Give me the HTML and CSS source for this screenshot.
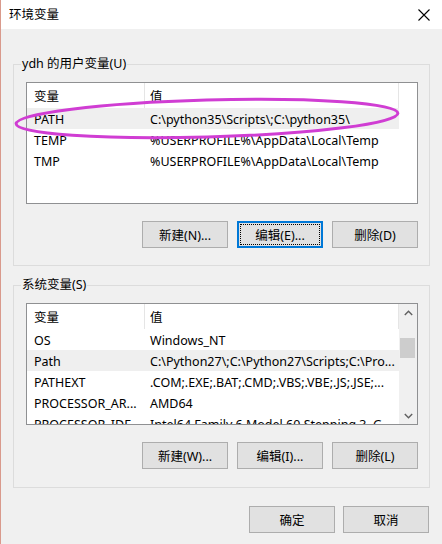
FILE: index.html
```html
<!DOCTYPE html>
<html lang="zh-CN">
<head>
<meta charset="utf-8">
<title>环境变量</title>
<link rel="stylesheet" href="styles.css">
</head>
<body>
<div class="window">
  <div class="titlebar">
    <span class="title">环境变量</span>
    <div class="close">
      <svg width="12" height="12" viewBox="0 0 12 12"><path d="M0.5 0.5 L11.5 11.5 M11.5 0.5 L0.5 11.5" stroke="#000" stroke-width="1.1" fill="none"/></svg>
    </div>
  </div>
  <div class="content">
    <fieldset class="group group-user">
      <legend>ydh 的用户变量(U)</legend>
      <div class="list">
        <div class="list-main">
          <div class="list-head"><div class="c1">变量</div><div class="c2">值</div></div>
          <div class="row sel"><div class="c1">PATH</div><div class="c2">C:\python35\Scripts\;C:\python35\</div></div>
          <div class="row"><div class="c1">TEMP</div><div class="c2">%USERPROFILE%\AppData\Local\Temp</div></div>
          <div class="row"><div class="c1">TMP</div><div class="c2">%USERPROFILE%\AppData\Local\Temp</div></div>
        </div>
      </div>
      <div class="btns">
        <div class="btn">新建(N)...</div>
        <div class="btn focus">编辑(E)...</div>
        <div class="btn">删除(D)</div>
      </div>
    </fieldset>
    <fieldset class="group group-sys">
      <legend>系统变量(S)</legend>
      <div class="list">
        <div class="list-main">
          <div class="list-head"><div class="c1">变量</div><div class="c2">值</div></div>
          <div class="row"><div class="c1">OS</div><div class="c2">Windows_NT</div></div>
          <div class="row sel"><div class="c1">Path</div><div class="c2">C:\Python27\;C:\Python27\Scripts;C:\Pro...</div></div>
          <div class="row"><div class="c1">PATHEXT</div><div class="c2">.COM;.EXE;.BAT;.CMD;.VBS;.VBE;.JS;.JSE;...</div></div>
          <div class="row"><div class="c1">PROCESSOR_AR...</div><div class="c2">AMD64</div></div>
          <div class="row"><div class="c1">PROCESSOR_IDE...</div><div class="c2">Intel64 Family 6 Model 60 Stepping 3, G...</div></div>
        </div>
        <div class="scrollbar">
          <div class="sb-btn"><svg width="9" height="6" viewBox="0 0 9 6"><path d="M0.8 5 L4.5 1.2 L8.2 5" stroke="#606060" stroke-width="1.4" fill="none"/></svg></div>
          <div class="sb-track"><div class="sb-thumb"></div></div>
          <div class="sb-btn"><svg width="9" height="6" viewBox="0 0 9 6"><path d="M0.8 1 L4.5 4.8 L8.2 1" stroke="#606060" stroke-width="1.4" fill="none"/></svg></div>
        </div>
      </div>
      <div class="btns">
        <div class="btn">新建(W)...</div>
        <div class="btn">编辑(I)...</div>
        <div class="btn">删除(L)</div>
      </div>
    </fieldset>
    <div class="dialog-btns">
      <div class="btn">确定</div>
      <div class="btn">取消</div>
    </div>
  </div>
  <svg class="annotation" width="441" height="544" viewBox="0 0 441 544">
    <ellipse cx="206" cy="118.5" rx="191" ry="18.5" transform="rotate(-1.6 206 118.5)" fill="none" stroke="#d03dd3" stroke-width="3"/>
  </svg>
</div>
</body>
</html>
```
FILE: styles.css
```css
* { box-sizing: border-box; }
html, body { margin: 0; padding: 0; }
body {
  background: #f0f0f0;
  font-family: "Noto Sans", "Noto Sans CJK SC", sans-serif;
  font-size: 12.5px;
  color: #000;
}
.window {
  position: relative;
  width: 442px;
  height: 544px;
  border-left: 1px solid #d99a8c;
  background: #f0f0f0;
  overflow: hidden;
}
.titlebar {
  height: 29px;
  background: #fff;
  display: flex;
  align-items: center;
  padding-left: 8px;
  padding-right: 3px;
}
.title { line-height: 16px; }
.close {
  margin-left: auto;
  width: 30px;
  height: 29px;
  display: flex;
  align-items: center;
  justify-content: center;
}
.content {
  padding: 0 12px;
}
.group {
  margin: 0;
  min-width: 0;
  border: 1px solid #dcdcdc;
  padding: 10px 11px 17px 12px;
}
.group-user { margin-top: 27px; }
.group-sys { margin-top: 11px; padding-bottom: 18px; }
.group legend {
  line-height: 16px;
  padding: 0 1px;
  margin-left: -5px;
}
.list {
  height: 122px;
  border: 1px solid #8f9092;
  background: #fff;
  display: flex;
  overflow: hidden;
}
.list-main {
  width: 372px;
  overflow: hidden;
}
.list-head, .row {
  display: flex;
  white-space: nowrap;
}
.list-head { height: 25px; align-items: center; }
.row { height: 21px; align-items: center; padding-top: 1px; }
.c1 { width: 118px; padding-left: 7px; overflow: hidden; }
.c2 { width: 254px; padding-left: 5px; overflow: hidden; }
.list-head .c1, .list-head .c2 {
  height: 25px;
  display: flex;
  align-items: center;
  border-right: 1px solid #e5e5e5;
}
.row.sel { background: #efefef; }
.scrollbar {
  width: 18px;
  background: #f0f0f0;
  display: flex;
  flex-direction: column;
}
.sb-btn {
  height: 17px;
  display: flex;
  align-items: center;
  justify-content: center;
}
.sb-track { flex: 1; }
.sb-thumb {
  margin: 17px 0 0 1px;
  width: 15px;
  height: 20px;
  background: #cdcdcd;
}
.btns {
  display: flex;
  justify-content: flex-end;
  gap: 9px;
  margin-top: 17px;
}
.btn {
  width: 86px;
  height: 27px;
  border: 1px solid #adadad;
  background: #e1e1e1;
  display: flex;
  align-items: center;
  justify-content: center;
  white-space: nowrap;
}
.btn.focus {
  border-color: #0078d7;
  box-shadow: inset 0 0 0 1px #0078d7;
  outline: 1px dotted #000;
  outline-offset: -4px;
}
.dialog-btns {
  display: flex;
  justify-content: flex-end;
  gap: 8px;
  margin-top: 18px;
  padding-right: 1px;
}
.annotation {
  position: absolute;
  left: 0;
  top: 0;
  pointer-events: none;
}
```
